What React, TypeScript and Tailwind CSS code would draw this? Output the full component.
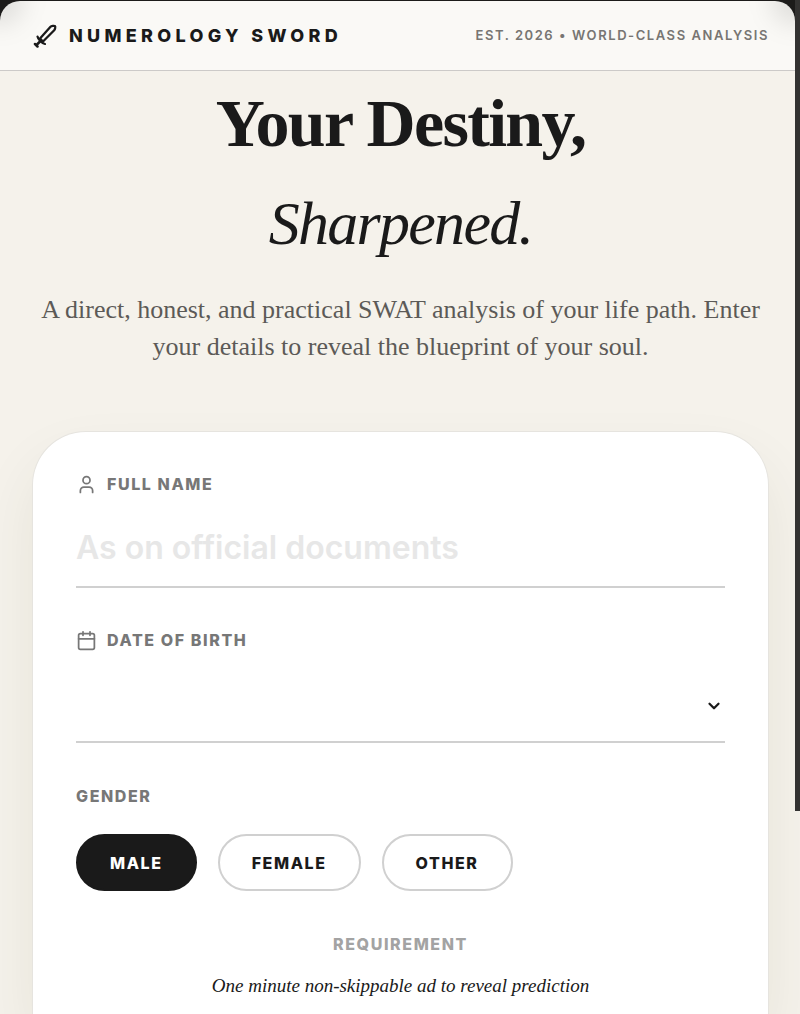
import React, { useState } from 'react';
import { Calendar, ChevronDown, User } from 'lucide-react';

const genders = ['Male', 'Female', 'Other'];

const SwordIcon: React.FC = () => (
    <svg
        className="size-[25px] shrink-0"
        viewBox="0 0 25 25"
        fill="none"
        stroke="currentColor"
        strokeWidth="2.3"
        strokeLinecap="round"
        strokeLinejoin="round"
        aria-hidden="true"
    >
        <path d="M8 15.500 18.500 3.800c.800-.900 3.900-1.300 4.500-.700s.100 3.300-.800 4.200L11 18.500z" />
        <path d="M5.500 13.500c.500 2.700 4.300 6.800 7.500 7.500" strokeWidth="2.200" />
        <path d="M8.500 18l-4 4M3 21l2.500 2.500" strokeWidth="2.500" />
    </svg>
);

const Header: React.FC = () => (
    <div className="bg-[#1c1b1a] pt-px">
        <header className="relative mr-[5px] overflow-hidden rounded-t-[20px] border-b border-[#cccac8] bg-[#faf9f6]">
            <div className="absolute -left-6 -top-6 size-12 rounded-full bg-black/10 blur-md" />
            <div className="absolute -right-6 -top-6 size-12 rounded-full bg-black/10 blur-md" />
            <div className="relative flex h-[69px] items-center justify-between pl-8 pr-[26px]">
                <div className="flex items-center gap-3">
                    <SwordIcon />
                    <span className="text-lg font-extrabold uppercase tracking-[0.24em]">Numerology Sword</span>
                </div>
                <span className="text-[13px] font-semibold uppercase tracking-[0.12em] text-[#777572]">
                    Est. 2026 • World-Class Analysis
                </span>
            </div>
        </header>
    </div>
);

const App: React.FC = () => {
    const [name, setName] = useState('');
    const [birthDate, setBirthDate] = useState('');
    const [gender, setGender] = useState('Male');

    return (
        <div className="relative flex min-h-screen flex-col overflow-hidden bg-[#f5f2eb] font-['Inter',sans-serif] text-[#1a1a1a]">
            <Header />
            <div className="absolute right-0 top-0 h-[811px] w-[5px] bg-[#333231]" />

            <main className="flex flex-1 flex-col pl-8 pr-[31px]">
                <section className="flex flex-col items-center pt-0.5 text-center font-['Liberation_Serif',serif]">
                    <h1 className="text-[68px] font-bold leading-[100px] tracking-tight">
                        Your Destiny,
                        <span className="block text-[62px] font-normal italic">Sharpened.</span>
                    </h1>
                    <p className="mt-[18px] text-[26px] leading-[37px] text-[#5c5a57]">
                        A direct, honest, and practical SWAT analysis of your life path. Enter your details to reveal the
                        blueprint of your soul.
                    </p>
                </section>

                <form
                    onSubmit={(e) => e.preventDefault()}
                    className="mt-[66px] flex-1 rounded-t-[54px] border border-b-0 border-[#e6e4df] bg-white px-[43px] pt-10 shadow-[0_30px_60px_rgba(60,60,30,0.08)]"
                >
                    <div>
                        <label htmlFor="name" className="flex items-center gap-[10px] text-base font-extrabold uppercase leading-6 tracking-widest text-[#777]">
                            <User className="size-[21px]" strokeWidth={2} />
                            Full Name
                        </label>
                        <input
                            id="name"
                            type="text"
                            value={name}
                            onChange={(e) => setName(e.target.value)}
                            placeholder="As on official documents"
                            className="mt-3 h-[80px] w-full border-b-2 border-[#d0d0d0] text-[32px] font-semibold outline-none placeholder:text-[#e7e7e7]"
                        />
                    </div>

                    <div className="mt-10">
                        <label htmlFor="birth" className="flex items-center gap-[10px] text-base font-extrabold uppercase leading-6 tracking-widest text-[#777]">
                            <Calendar className="size-[21px]" strokeWidth={2} />
                            Date of Birth
                        </label>
                        <div className="mt-3 flex h-[79px] items-center border-b-2 border-[#d0d0d0] pt-1.5">
                            <input
                                id="birth"
                                type="text"
                                value={birthDate}
                                onChange={(e) => setBirthDate(e.target.value)}
                                className="min-w-0 flex-1 text-[32px] font-semibold outline-none"
                            />
                            <ChevronDown className="mr-[2px] size-[18px]" strokeWidth={3} />
                        </div>
                    </div>

                    <fieldset className="mt-[41px]">
                        <legend className="text-base font-extrabold uppercase leading-6 tracking-widest text-[#777]">Gender</legend>
                        <div className="mt-[26px] flex gap-[21px]">
                            {genders.map((item) => (
                                <button
                                    key={item}
                                    type="button"
                                    aria-pressed={gender === item}
                                    onClick={() => setGender(item)}
                                    className={`h-[57px] rounded-full border-2 px-8 text-base font-extrabold uppercase tracking-widest ${gender === item
                                            ? 'border-[#1a1a1a] bg-[#1a1a1a] text-white'
                                            : 'border-[#d0d0d0] bg-white'
                                        }`}
                                >
                                    {item}
                                </button>
                            ))}
                        </div>
                    </fieldset>

                    <div className="mt-[41px] text-center">
                        <p className="text-base font-extrabold uppercase leading-6 tracking-widest text-[#a3a3a3]">Requirement</p>
                        <p className="mt-[14px] font-['Liberation_Serif',serif] text-[19px] italic leading-8">
                            One minute non-skippable ad to reveal prediction
                        </p>
                    </div>
                </form>
            </main>
        </div>
    );
};

export default App;
